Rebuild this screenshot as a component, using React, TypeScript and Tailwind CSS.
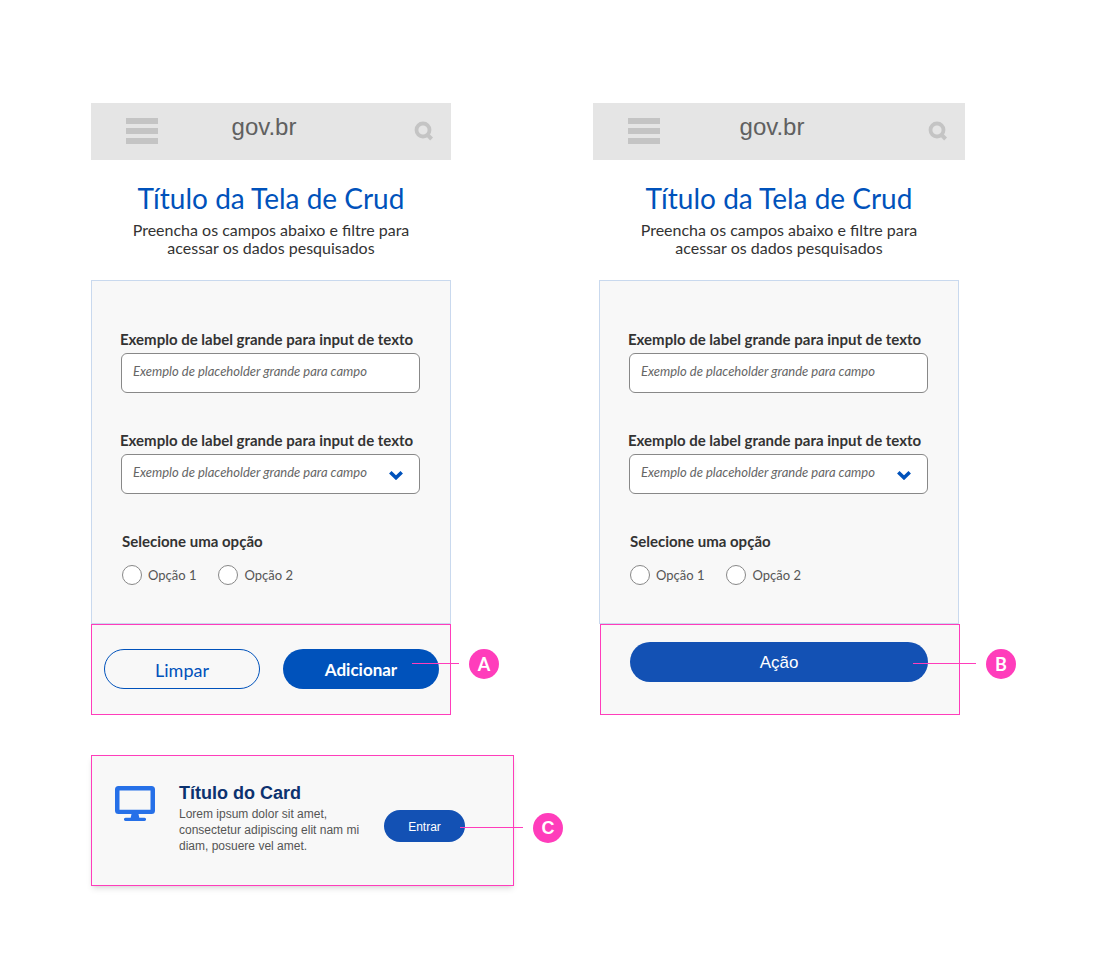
function SearchIcon() {
  return (
    <svg viewBox="0 0 20 20" className="size-5" fill="none" stroke="#c4c4c4" aria-hidden="true">
      <circle cx="9" cy="9" r="6.5" strokeWidth="3.8" />
      <path d="M12.8 13.200l4.800 4.800" strokeWidth="4" />
    </svg>
  );
}

function AppHeader() {
  return (
    <header className="grid h-[57px] grid-cols-[1fr_auto_1fr] items-center bg-[#e5e5e5] pr-[17px] pb-0.5 pl-[35px]">
      <button type="button" aria-label="Menu" className="flex w-8 flex-col gap-1">
        <span className="h-1.5 bg-[#c4c4c4]" />
        <span className="h-1.5 bg-[#c4c4c4]" />
        <span className="h-1.5 bg-[#c4c4c4]" />
      </button>
      <span className="-ml-5 pr-3 pb-2 font-['Liberation_Sans',Arial,sans-serif] text-2xl text-[#606060]">gov.br</span>
      <button type="button" aria-label="Pesquisar" className="justify-self-end">
        <SearchIcon />
      </button>
    </header>
  );
}

function Intro() {
  return (
    <div className="px-6 pt-5 text-center">
      <h1 className="text-[28px] leading-9 text-[#0052bb]">Título da Tela de Crud</h1>
      <p className="mt-[5px] text-base leading-[18px] text-[#333]">
        Preencha os campos abaixo e filtre para
        <br />
        acessar os dados pesquisados
      </p>
    </div>
  );
}

function FormFields({ id }: { id: string }) {
  return (
    <div className="h-[344px] border border-[#c9d9ee] bg-[#f8f8f8] px-7 pt-[46px]">
      <label htmlFor={id + "-texto"} className="mb-0.5 block text-[15px] leading-6 font-bold text-[#333]">
        Exemplo de label grande para input de texto
      </label>
      <input
        id={id + "-texto"}
        placeholder="Exemplo de placeholder grande para campo"
        className="ml-px block h-10 w-[299px] rounded-md border border-[#888] bg-white px-[11px] pb-1 text-[13px] italic placeholder:text-[#666]"
      />
      <label htmlFor={id + "-lista"} className="mt-[35px] mb-0.5 block text-[15px] leading-6 font-bold text-[#333]">
        Exemplo de label grande para input de texto
      </label>
      <div className="relative ml-px w-[299px]">
        <select
          id={id + "-lista"}
          className="block h-10 w-full appearance-none rounded-md border border-[#888] bg-white px-[11px] pb-0.5 text-[13px] text-[#666] italic"
        >
          <option>Exemplo de placeholder grande para campo</option>
        </select>
        <svg viewBox="0 0 14 10" className="pointer-events-none absolute top-4 right-[17px] h-2.5 w-3.5" fill="none" stroke="#0052bb" strokeWidth="3.6" aria-hidden="true">
          <path d="M1.300 2.300L7 7.700L12.700 2.300" />
        </svg>
      </div>
      <fieldset className="pt-[35px] pl-0.5">
        <legend className="contents text-[15px] leading-6 font-bold text-[#333]">Selecione uma opção</legend>
        <div className="mt-3 flex gap-[22px] text-[13px] leading-5 text-[#555]">
          {["Opção 1", "Opção 2"].map((option) => (
            <label key={option} className="flex items-center gap-1.5">
              <input type="radio" name={id + "-opcao"} className="size-5 appearance-none rounded-full border border-[#888] bg-white checked:border-[6px]" />
              {option}
            </label>
          ))}
        </div>
      </fieldset>
    </div>
  );
}

function Marker({ letter, position, line }: { letter: string; position: string; line: string }) {
  return (
    <div className={"absolute left-full flex items-start gap-2.5 " + position}>
      <span className={"mt-3.5 h-px bg-[#ff3dbb] " + line} />
      <span className="flex size-[30px] items-center justify-center rounded-full bg-[#ff3dbb] text-lg leading-none font-bold text-white">
        {letter}
      </span>
    </div>
  );
}

export default function App() {
  return (
    <main className="px-[91px] pt-[103px] pb-16 font-[Lato,sans-serif]">
      <div className="flex gap-[142px]">
        <section className="w-[360px]">
          <AppHeader />
          <Intro />
          <form className="mt-[23px]">
            <FormFields id="a" />
            <div className="relative flex h-[91px] items-start justify-between border border-[#ff3dbb] bg-[#f8f8f8] pt-6 pr-[11px] pl-3">
              <button type="reset" className="h-10 w-[156px] rounded-full border border-[#0052bb] pt-0.5 text-lg text-[#0052bb]">
                Limpar
              </button>
              <button type="button" className="h-10 w-[156px] rounded-full bg-[#0052bb] pt-0.5 text-[17px] font-bold text-white">
                Adicionar
              </button>
              <Marker letter="A" position="top-6 -ml-[38px]" line="w-[47px]" />
            </div>
          </form>
        </section>

        <section className="w-[372px]">
          <AppHeader />
          <div className="mx-1.5">
            <Intro />
            <form className="mt-[23px]">
              <FormFields id="b" />
              <div className="relative -mr-px ml-px h-[91px] border border-[#ff3dbb] bg-[#f8f8f8] pt-[17px] pr-[31px] pl-[29px]">
                <button type="button" className="h-10 w-full rounded-full bg-[#1351b4] pt-0.5 font-['Liberation_Sans',Arial,sans-serif] text-[17px] text-white">
                  Ação
                </button>
                <Marker letter="B" position="top-6 -ml-[46px]" line="w-[63px]" />
              </div>
            </form>
          </div>
        </section>
      </div>

      <article className="relative mt-10 flex h-[131px] w-[423px] border border-[#ff3dbb] bg-[#f8f8f8] pl-[23px] font-['Liberation_Sans',Arial,sans-serif] shadow-md">
        <svg viewBox="0 0 40 35" className="mt-[30px] h-[35px] w-10 shrink-0" fill="#2670e8" aria-hidden="true">
          <path fillRule="evenodd" d="M3.5 0H36.5Q40 0 40 3.5V24.500Q40 28 36.500 28H23.500l.8 3.700h5.200a1.600 1.600 0 0 1 0 3.200h-19a1.600 1.600 0 0 1 0-3.200H15.700l.8-3.700H3.500Q0 28 0 24.500V3.500Q0 0 3.500 0ZM4.500 4.500V23.800H35.500V4.500Z" />
        </svg>
        <div className="mt-[26px] ml-6 w-[188px]">
          <h2 className="mb-0.5 text-lg leading-[22px] font-bold text-[#0c326f]">Título do Card</h2>
          <p className="text-xs leading-4 text-[#555]">Lorem ipsum dolor sit amet, consectetur adipiscing elit nam mi diam, posuere vel amet.</p>
        </div>
        <button type="button" className="mt-[54px] ml-[17px] h-8 w-[81px] rounded-full bg-[#1351b4] pt-0.5 text-xs text-white">
          Entrar
        </button>
        <Marker letter="C" position="top-[57px] -ml-[53px]" line="w-[63px]" />
      </article>
    </main>
  );
}
